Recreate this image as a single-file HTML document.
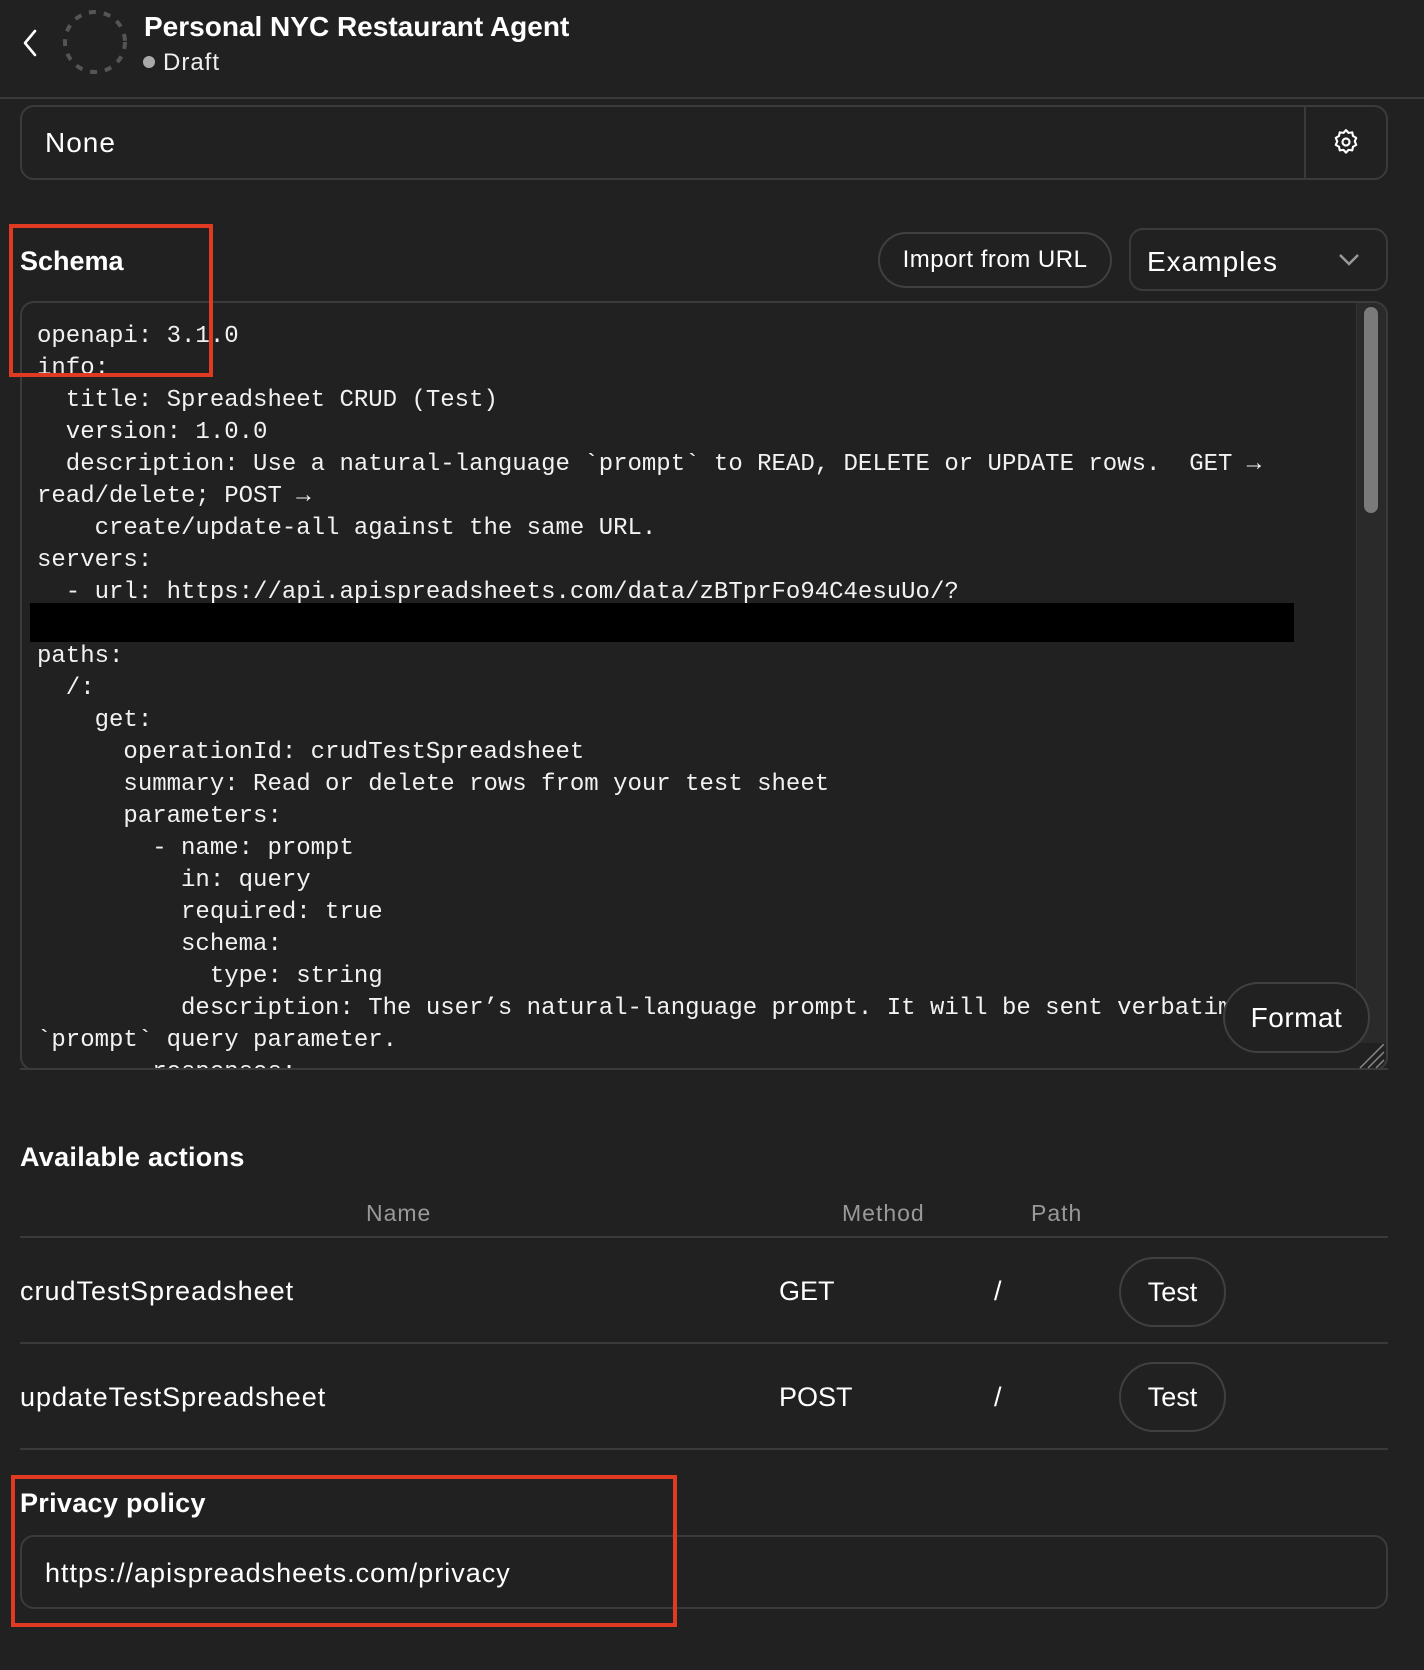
<!DOCTYPE html>
<html><head><meta charset="utf-8"><style>
*{margin:0;padding:0;box-sizing:border-box}
body{width:1424px;height:1670px;background:#212121;color:#fff;font-family:"Liberation Sans",sans-serif;position:relative;overflow:hidden}
.a{position:absolute;white-space:nowrap}
.ls{letter-spacing:1px}
.box{position:absolute;border:2px solid #3b3b3b;border-radius:14px}
pre{position:absolute;left:37px;top:321px;font-family:"Liberation Mono",monospace;font-size:24px;line-height:32px;color:#f2f2f2}
.pill{position:absolute;border:2px solid #404040;border-radius:40px;display:flex;align-items:center;justify-content:center;background:#212121}
.hr{position:absolute;left:20px;width:1368px;height:2px;background:#3a3a3a}
.red{position:absolute;border:4px solid #e03a22}
</style></head><body>
<svg class="a" style="left:18px;top:28px" width="24" height="30" viewBox="0 0 24 30"><path d="M17 3 L7 15 L17 27" fill="none" stroke="#fff" stroke-width="2.6" stroke-linecap="round" stroke-linejoin="round"/></svg>
<svg class="a" style="left:62px;top:9px" width="66" height="66"><circle cx="33" cy="33" r="30" fill="none" stroke="#555" stroke-width="4" stroke-dasharray="7 8"/></svg>
<div class="a" style="left:144px;top:11px;font-size:28px;font-weight:bold">Personal NYC Restaurant Agent</div>
<div class="a" style="left:143px;top:56px;width:12px;height:12px;border-radius:50%;background:#aaa"></div>
<div class="a ls" style="left:163px;top:49px;font-size:24px;color:#eee">Draft</div>
<div class="a" style="left:0;top:97px;width:1424px;height:2px;background:#3a3a3a"></div>

<div class="box" style="left:20px;top:105px;width:1368px;height:75px"></div>
<div class="a" style="left:1304px;top:106px;width:2px;height:73px;background:#3a3a3a"></div>
<div class="a ls" style="left:45px;top:127px;font-size:28px">None</div>
<svg class="a" style="left:1331px;top:127px" width="30" height="30" viewBox="0 0 24 24"><path d="M12 2.5l2 2.2 3-.4.6 2.9 2.6 1.5-1.2 2.8 1.2 2.8-2.6 1.5-.6 2.9-3-.4-2 2.2-2-2.2-3 .4-.6-2.9-2.6-1.5 1.2-2.8-1.2-2.8 2.6-1.5.6-2.9 3 .4z" fill="none" stroke="#fff" stroke-width="1.7" stroke-linejoin="round"/><circle cx="12" cy="12" r="2.8" fill="none" stroke="#fff" stroke-width="1.7"/></svg>

<div class="a" style="left:20px;top:246px;font-size:27px;font-weight:bold">Schema</div>
<div class="pill" style="left:878px;top:232px;width:234px;height:56px;font-size:24px;letter-spacing:.5px">Import from URL</div>
<div class="box" style="left:1129px;top:228px;width:259px;height:63px"></div>
<div class="a ls" style="left:1147px;top:246px;font-size:28px">Examples</div>
<svg class="a" style="left:1336px;top:251px" width="26" height="18"><path d="M4 4l9 9 9-9" fill="none" stroke="#999" stroke-width="2.5"/></svg>

<div class="box" style="left:20px;top:301px;width:1368px;height:770px;overflow:hidden">
<div style="position:absolute;right:0;top:0;width:30px;height:740px;background:#2a2a2a;border-left:1px solid #333"></div>
<div style="position:absolute;right:8px;top:4px;width:14px;height:206px;border-radius:7px;background:#7a7a7a"></div>
</div>
<pre>openapi: 3.1.0
info:
  title: Spreadsheet CRUD (Test)
  version: 1.0.0
  description: Use a natural-language `prompt` to READ, DELETE or UPDATE rows.  GET →
read/delete; POST →
    create/update-all against the same URL.
servers:
  - url: https://api.apispreadsheets.com/data/zBTprFo94C4esuUo/?

paths:
  /:
    get:
      operationId: crudTestSpreadsheet
      summary: Read or delete rows from your test sheet
      parameters:
        - name: prompt
          in: query
          required: true
          schema:
            type: string
          description: The user’s natural-language prompt. It will be sent verbatim
`prompt` query parameter.
        responses:</pre>
<div class="a" style="left:22px;top:1069px;width:1366px;height:40px;background:#212121"></div>
<div class="a" style="left:30px;top:603px;width:1264px;height:39px;background:#000"></div>
<div class="a" style="left:20px;top:1068px;width:1368px;height:2px;background:#3a3a3a"></div>
<svg class="a" style="left:1358px;top:1044px" width="28" height="26"><path d="M2 24L26 0M10 24L26 8M18 24L26 16" stroke="#888" stroke-width="1.5"/></svg>
<div class="pill" style="left:1223px;top:982px;width:147px;height:71px;font-size:28px;letter-spacing:.5px">Format</div>

<div class="a" style="left:20px;top:1142px;font-size:27px;font-weight:bold;letter-spacing:.3px">Available actions</div>
<div class="a ls" style="left:366px;top:1200px;font-size:23px;color:#999">Name</div>
<div class="a ls" style="left:842px;top:1200px;font-size:23px;color:#999">Method</div>
<div class="a ls" style="left:1031px;top:1200px;font-size:23px;color:#999">Path</div>
<div class="hr" style="top:1236px"></div>
<div class="a ls" style="left:20px;top:1276px;font-size:27px">crudTestSpreadsheet</div>
<div class="a" style="left:779px;top:1276px;font-size:27px">GET</div>
<div class="a" style="left:994px;top:1276px;font-size:27px">/</div>
<div class="pill" style="left:1119px;top:1257px;width:107px;height:70px;font-size:27px">Test</div>
<div class="hr" style="top:1342px"></div>
<div class="a ls" style="left:20px;top:1382px;font-size:27px">updateTestSpreadsheet</div>
<div class="a" style="left:779px;top:1382px;font-size:27px">POST</div>
<div class="a" style="left:994px;top:1382px;font-size:27px">/</div>
<div class="pill" style="left:1119px;top:1362px;width:107px;height:70px;font-size:27px">Test</div>
<div class="hr" style="top:1448px"></div>

<div class="a" style="left:20px;top:1488px;font-size:27px;font-weight:bold;letter-spacing:.3px">Privacy policy</div>
<div class="box" style="left:20px;top:1535px;width:1368px;height:74px"></div>
<div class="a ls" style="left:45px;top:1558px;font-size:27px">https://apispreadsheets.com/privacy</div>

<div class="red" style="left:9px;top:224px;width:204px;height:153px"></div>
<div class="red" style="left:11px;top:1475px;width:666px;height:152px"></div>
</body></html>
